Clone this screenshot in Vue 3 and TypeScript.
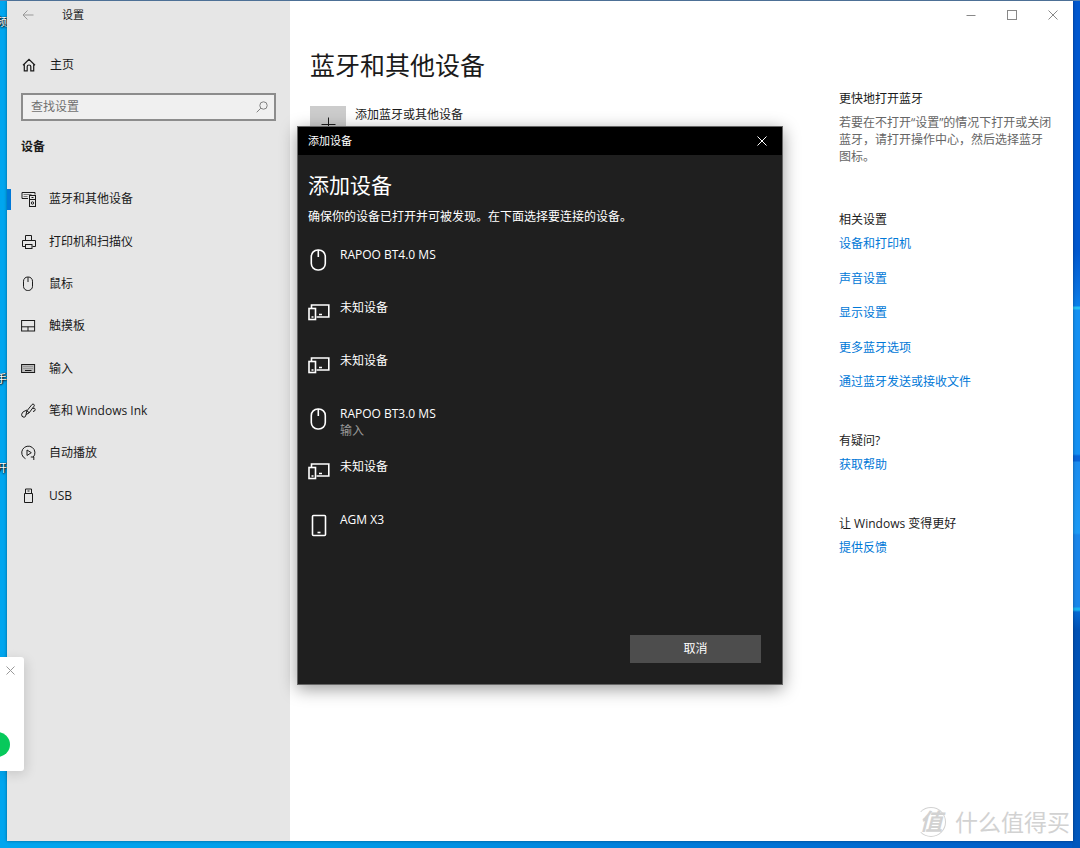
<script setup lang="ts">
import { ref } from 'vue'

type DeviceKind = 'mouse' | 'screen' | 'phone'

interface NavItem {
  icon: string
  label: string
}

interface Device {
  kind: DeviceKind
  name: string
  detail?: string
}

const query = ref('')
const current = ref(0)

const navItems: NavItem[] = [
  { icon: 'devices', label: '蓝牙和其他设备' },
  { icon: 'printer', label: '打印机和扫描仪' },
  { icon: 'mouse', label: '鼠标' },
  { icon: 'touchpad', label: '触摸板' },
  { icon: 'keyboard', label: '输入' },
  { icon: 'pen', label: '笔和 Windows Ink' },
  { icon: 'autoplay', label: '自动播放' },
  { icon: 'usb', label: 'USB' },
]

const relatedLinks: string[] = ['设备和打印机', '声音设置', '显示设置', '更多蓝牙选项', '通过蓝牙发送或接收文件']

const devices: Device[] = [
  { kind: 'mouse', name: 'RAPOO BT4.0 MS' },
  { kind: 'screen', name: '未知设备' },
  { kind: 'screen', name: '未知设备' },
  { kind: 'mouse', name: 'RAPOO BT3.0 MS', detail: '输入' },
  { kind: 'screen', name: '未知设备' },
  { kind: 'phone', name: 'AGM X3' },
]
</script>

<template>
  <div class="desktop">
    <div class="desk-labels" aria-hidden="true">
      <span class="desk-label first">频</span>
      <span class="desk-label second">手</span>
      <span class="desk-label third">开</span>
    </div>

    <div class="window">
      <aside class="sidebar">
        <div class="titlebar">
          <button class="back" type="button" aria-label="返回">
            <svg width="12" height="12" viewBox="0 0 12 12"><path d="M11.5 6H1M5.5 1.5L1 6l4.500 4.500" /></svg>
          </button>
          <span>设置</span>
        </div>

        <a class="home" href="#">
          <svg width="14" height="14" viewBox="0 0 14 14">
            <path d="M1 7.200L7 1.300l6 5.900M2.300 6.200v6.600h2.900V8.600q0-1.600 1.800-1.600t1.800 1.600v4.200h2.900V6.200" />
          </svg>
          <span>主页</span>
        </a>

        <label class="search">
          <input v-model="query" type="text" placeholder="查找设置" aria-label="查找设置" />
          <svg width="12" height="12" viewBox="0 0 12 12">
            <circle cx="7.500" cy="4.500" r="3.700" /><path d="M4.800 7.200L.7 11.300" />
          </svg>
        </label>

        <h2>设备</h2>

        <nav>
          <a
            v-for="(item, i) in navItems"
            :key="item.label"
            href="#"
            :class="{ active: current === i }"
            @click.prevent="current = i"
          >
            <svg class="nav-icon" width="16" height="16" viewBox="0 0 16 16">
              <template v-if="item.icon === 'devices'">
                <path d="M7 7.500H1v-6h13v2" />
                <path class="faint" d="M2.500 3.500h8M2.500 5.500h4" />
                <rect x="8.500" y="4.500" width="6" height="11" />
                <path d="M8.500 8.500h6M10.500 6.500h2" />
                <circle cx="11.500" cy="12" r="1.200" />
              </template>
              <template v-else-if="item.icon === 'printer'">
                <path d="M4.500 6V1.500h6V6M4 12.500H1.500v-6h13v6H11.500" />
                <rect x="4.500" y="10.500" width="6.500" height="4" />
              </template>
              <template v-else-if="item.icon === 'mouse'">
                <rect x="2.500" y="1" width="9" height="13.500" rx="4.200" /><path d="M7 1v5" />
              </template>
              <template v-else-if="item.icon === 'touchpad'">
                <rect x=".6" y="2.500" width="13" height="10.500" /><path d="M.6 8.800h13M7 8.800V13" />
              </template>
              <template v-else-if="item.icon === 'keyboard'">
                <rect class="keys" x=".6" y="3.500" width="13" height="8" />
                <path class="faint" d="M2.500 5.500h9.500M2.500 7.500h9.500" stroke-dasharray="1 1" />
                <path d="M4 9.500h6.500" />
              </template>
              <template v-else-if="item.icon === 'pen'">
                <path
                  d="M5 11.500L5.800 8 11 1.500q1-.9 1.900-.1t.1 1.800L8 10l-3 1.500M5.800 8q1.800.3 2.200 2M6 7Q1 8.500.6 11.200T3 14.300Q5 14 5 11.500M11.500 5.500q2.800-1 2.700 1T12 8.500"
                />
              </template>
              <template v-else-if="item.icon === 'autoplay'">
                <path d="M4.500 13.700A6.600 6.600 0 1 1 12.200 12.200M12.800 15V12h-3" />
                <path d="M6 5l4.300 2.700L6 10.500z" />
              </template>
              <template v-else>
                <path d="M4.500 5V1h6v4M3.500 5.500h8v9h-8zM6.500 3h2" />
              </template>
            </svg>
            <span>{{ item.label }}</span>
          </a>
        </nav>
      </aside>

      <div class="pane">
        <div class="caption">
          <button type="button" aria-label="最小化">
            <svg width="10" height="10" viewBox="0 0 10 10"><path d="M.5 5.500h9" /></svg>
          </button>
          <button type="button" aria-label="最大化">
            <svg width="10" height="10" viewBox="0 0 10 10"><rect x=".5" y=".5" width="9" height="9" /></svg>
          </button>
          <button type="button" aria-label="关闭">
            <svg width="10" height="10" viewBox="0 0 10 10"><path d="M.5.5l9 9M9.500.5l-9 9" /></svg>
          </button>
        </div>

        <div class="columns">
          <main>
            <h1>蓝牙和其他设备</h1>
            <button class="add" type="button">
              <span class="plus">
                <svg width="15" height="15" viewBox="0 0 15 15"><path d="M7.500.5v14M.5 7.500h14" /></svg>
              </span>
              <span>添加蓝牙或其他设备</span>
            </button>
          </main>

          <aside class="related">
            <section>
              <h3>更快地打开蓝牙</h3>
              <p>若要在不打开“设置”的情况下打开或关闭蓝牙，请打开操作中心，然后选择蓝牙图标。</p>
            </section>
            <section class="links">
              <h3>相关设置</h3>
              <ul>
                <li v-for="link in relatedLinks" :key="link"><a href="#">{{ link }}</a></li>
              </ul>
            </section>
            <section>
              <h3>有疑问?</h3>
              <a href="#">获取帮助</a>
            </section>
            <section>
              <h3>让 Windows 变得更好</h3>
              <a href="#">提供反馈</a>
            </section>
          </aside>
        </div>
      </div>
    </div>

    <div class="overlay">
      <div class="dialog" role="dialog" aria-labelledby="dialog-title">
        <div class="dialog-bar">
          <span>添加设备</span>
          <button type="button" aria-label="关闭">
            <svg width="10" height="10" viewBox="0 0 10 10"><path d="M.5.5l9 9M9.500.5l-9 9" /></svg>
          </button>
        </div>
        <div class="dialog-body">
          <h2 id="dialog-title">添加设备</h2>
          <p>确保你的设备已打开并可被发现。在下面选择要连接的设备。</p>
          <ul>
            <li v-for="(device, i) in devices" :key="i">
              <button type="button">
                <svg width="22" height="24" viewBox="0 0 22 24">
                  <template v-if="device.kind === 'mouse'">
                    <rect x="3.300" y="2" width="14" height="20" rx="6.500" /><path d="M10.300 2v7" />
                  </template>
                  <template v-else-if="device.kind === 'screen'">
                    <path d="M3.500 7V4h17.300v12H8.500" />
                    <rect x="1" y="7.500" width="6.500" height="11" />
                    <path d="M11 13.500h3M3.500 16h2" />
                  </template>
                  <template v-else>
                    <rect x="4.500" y="2.500" width="13" height="20" rx="1" /><path d="M9.500 19.500h3" />
                  </template>
                </svg>
                <span class="device-text">
                  <span>{{ device.name }}</span>
                  <small v-if="device.detail">{{ device.detail }}</small>
                </span>
              </button>
            </li>
          </ul>
          <button class="cancel" type="button">取消</button>
        </div>
      </div>
    </div>

    <div class="toast">
      <button type="button" aria-label="关闭">
        <svg width="9" height="9" viewBox="0 0 9 9"><path d="M.5.5l8 8M8.500.5l-8 8" /></svg>
      </button>
      <span class="dot"></span>
    </div>

    <div class="watermark"><span class="badge">值</span><span>什么值得买</span></div>
  </div>
</template>

<style>
body {
  margin: 0;
}
</style>

<style scoped>
.desktop {
  position: relative;
  display: flex;
  box-sizing: border-box;
  min-height: 100vh;
  padding: 1px 7px 7px;
  overflow: hidden;
  font: 12px/18px "Open Sans", "Noto Sans CJK SC", sans-serif;
  color: #1a1a1a;
  background:
    linear-gradient(#5b8bb5, #5b7fad) top / 100% 1px no-repeat,
    linear-gradient(#0057cf 0, #0057cf 250px, #0a72e0 292px, #0a80ea 306px, #25c0f5 307px, #25c0f5 309px,
      #1490f2 310px, #1490f2 454px, #0864d8 456px, #0864d8 461px, #1c8cee 462px, #1c9af5 533px, #1a86ea 535px,
      #1a86ea 607px, #19b2f0 608px, #19b2f0 610px, #0568d2 612px, #0051b5 630px, #0057bd 100%) right / 8px 100% no-repeat,
    linear-gradient(90deg, #00a6ef, #009ce8 30%, #0074d6 70%, #0058c4);
}

button,
input {
  padding: 0;
  border: 0;
  background: none;
  font: inherit;
  color: inherit;
}

h1,
h2,
h3,
p,
ul {
  margin: 0;
  padding: 0;
  font-weight: 400;
  list-style: none;
}

a {
  color: #0078d7;
  text-decoration: none;
}

svg {
  display: block;
  flex: none;
  fill: none;
  stroke: currentColor;
}

.desk-label {
  position: absolute;
  left: 0;
  display: flex;
  justify-content: flex-end;
  width: 7px;
  overflow: hidden;
  color: #fff;
  font-size: 11px;
  line-height: 16px;
  text-shadow: 0 1px 2px #000, 1px 0 1px #000;
}

.first {
  top: 14px;
}

.second {
  top: 371px;
}

.third {
  top: 460px;
}

.window {
  display: flex;
  flex: 1;
  background: #fff;
  box-shadow: 0 0 3px #0006;
}

.sidebar {
  flex: none;
  width: 283px;
  background: #e6e6e6;
}

.titlebar {
  display: flex;
  align-items: center;
  height: 28px;
  font-size: 11px;
}

.back {
  width: 55px;
  padding-left: 15px;
  color: #999;
}

.home {
  display: flex;
  align-items: center;
  gap: 14px;
  height: 36px;
  margin-top: 18px;
  padding-left: 15px;
  color: #1a1a1a;
}

.home svg {
  stroke-width: 1.2;
}

.search {
  display: flex;
  align-items: center;
  box-sizing: border-box;
  height: 28px;
  margin: 10px 14px 0;
  padding: 0 6px 0 8px;
  border: 2px solid #8c8c8c;
  background: #f0f0f0;
  color: #808080;
}

.search input {
  flex: 1;
  min-width: 0;
  outline: 0;
  color: #1a1a1a;
}

.search input::placeholder {
  color: #707070;
  opacity: 1;
}

.sidebar h2 {
  margin: 16px 14px 0;
  font-size: 12px;
  line-height: 20px;
  font-weight: 700;
}

nav {
  display: grid;
  grid-auto-rows: 1fr;
  height: 339px;
  margin-top: 21px;
}

nav a {
  position: relative;
  display: flex;
  align-items: center;
  gap: 12px;
  padding-left: 14px;
  color: #1a1a1a;
}

nav .active::before {
  content: "";
  position: absolute;
  left: 0;
  width: 4px;
  height: 21px;
  background: #0078d7;
}

.faint {
  stroke: #777;
}

.keys {
  fill: #bbb;
}

.pane {
  display: flex;
  flex: 1;
  flex-direction: column;
}

.caption {
  display: flex;
  justify-content: flex-end;
  height: 28px;
}

.caption button {
  display: grid;
  place-items: center;
  width: 41px;
  color: #888;
}

.columns {
  display: flex;
}

main {
  flex: 1;
  padding: 18px 20px;
}

h1 {
  font-size: 25px;
  line-height: 36px;
}

.add {
  display: flex;
  align-items: flex-start;
  gap: 9px;
  margin-top: 23px;
}

.plus {
  display: grid;
  place-items: center;
  width: 36px;
  height: 36px;
  background: #ccc;
}

.related {
  display: flex;
  flex: none;
  flex-direction: column;
  gap: 41px;
  box-sizing: border-box;
  width: 234px;
  padding-top: 61px;
}

.related h3 {
  margin-bottom: 6px;
  font-size: 12px;
}

.related p {
  width: 214px;
  margin-bottom: 5px;
  line-height: 17px;
  color: #666;
}

.related section > a {
  display: block;
}

.links ul {
  display: flex;
  flex-direction: column;
  justify-content: space-between;
  height: 156px;
}

.overlay {
  position: absolute;
  inset: 126px 0 auto;
  display: flex;
  justify-content: center;
}

.dialog {
  box-sizing: border-box;
  width: 486px;
  border: 1px solid #666;
  background: #1f1f1f;
  box-shadow: 0 4px 16px #0006;
  color: #fff;
}

.dialog-bar {
  display: flex;
  align-items: center;
  justify-content: space-between;
  height: 28px;
  padding-left: 10px;
  background: #000;
  font-size: 11px;
}

.dialog-bar button {
  display: grid;
  place-items: center;
  width: 40px;
  height: 28px;
}

.dialog-body {
  display: flex;
  flex-direction: column;
  padding: 16px 21px 21px 10px;
}

.dialog h2 {
  font-size: 21px;
  line-height: 28px;
}

.dialog p {
  margin: 9px 0 20px;
}

.dialog li {
  height: 53px;
}

.dialog li button {
  display: flex;
  align-items: flex-start;
  gap: 10px;
  line-height: 17px;
  text-align: left;
}

.dialog li svg {
  margin-top: 2px;
  stroke-width: 1.6;
}

.device-text {
  display: flex;
  flex-direction: column;
}

.device-text small {
  font-size: 12px;
  color: #999;
}

.cancel {
  align-self: flex-end;
  width: 131px;
  height: 28px;
  margin-top: 71px;
  background: #4d4d4d;
}

.toast {
  position: absolute;
  top: 657px;
  left: 0;
  width: 24px;
  height: 114px;
  border-radius: 0 3px 3px 0;
  background: #fff;
  box-shadow: 2px 3px 12px #0002;
}

.toast button {
  display: block;
  padding: 9px 6px;
  color: #999;
}

.dot {
  position: absolute;
  top: 75px;
  left: -15px;
  width: 25px;
  height: 25px;
  border-radius: 50%;
  background: #07c95b;
}

.watermark {
  position: absolute;
  right: 10px;
  bottom: 10px;
  display: flex;
  align-items: center;
  gap: 9px;
  font-size: 23px;
  line-height: 32px;
  color: #d2d2d2;
}

.badge {
  box-sizing: border-box;
  width: 30px;
  height: 30px;
  border: 1px solid #d2d2d2;
  border-left-color: transparent;
  border-radius: 50%;
  font-weight: 700;
  font-style: italic;
  line-height: 26px;
  text-align: center;
}
</style>
